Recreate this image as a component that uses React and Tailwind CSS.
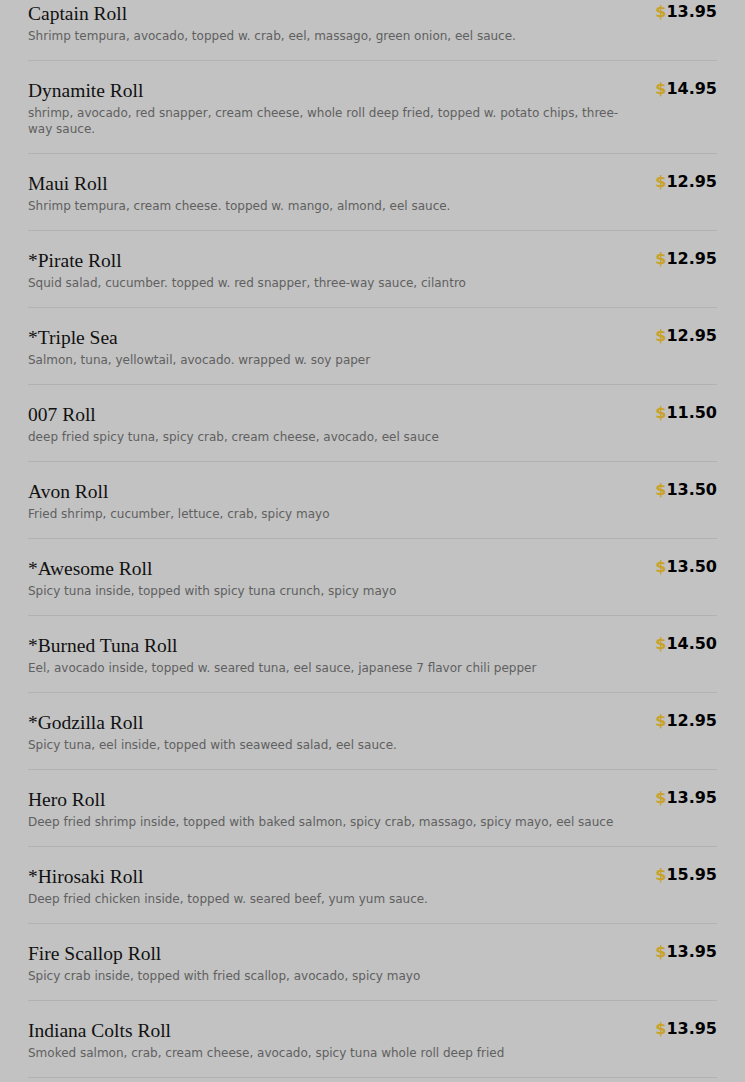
import React from "react";

const items = [
  ["Captain Roll", "Shrimp tempura, avocado, topped w. crab, eel, massago, green onion, eel sauce.", "13.95"],
  ["Dynamite Roll", "shrimp, avocado, red snapper, cream cheese, whole roll deep fried, topped w. potato chips, three-way sauce.", "14.95"],
  ["Maui Roll", "Shrimp tempura, cream cheese. topped w. mango, almond, eel sauce.", "12.95"],
  ["*Pirate Roll", "Squid salad, cucumber. topped w. red snapper, three-way sauce, cilantro", "12.95"],
  ["*Triple Sea", "Salmon, tuna, yellowtail, avocado. wrapped w. soy paper", "12.95"],
  ["007 Roll", "deep fried spicy tuna, spicy crab, cream cheese, avocado, eel sauce", "11.50"],
  ["Avon Roll", "Fried shrimp, cucumber, lettuce, crab, spicy mayo", "13.50"],
  ["*Awesome Roll", "Spicy tuna inside, topped with spicy tuna crunch, spicy mayo", "13.50"],
  ["*Burned Tuna Roll", "Eel, avocado inside, topped w. seared tuna, eel sauce, japanese 7 flavor chili pepper", "14.50"],
  ["*Godzilla Roll", "Spicy tuna, eel inside, topped with seaweed salad, eel sauce.", "12.95"],
  ["Hero Roll", "Deep fried shrimp inside, topped with baked salmon, spicy crab, massago, spicy mayo, eel sauce", "13.95"],
  ["*Hirosaki Roll", "Deep fried chicken inside, topped w. seared beef, yum yum sauce.", "15.95"],
  ["Fire Scallop Roll", "Spicy crab inside, topped with fried scallop, avocado, spicy mayo", "13.95"],
  ["Indiana Colts Roll", "Smoked salmon, crab, cream cheese, avocado, spicy tuna whole roll deep fried", "13.95"],
];

export default function App() {
  return (
    <div className="min-h-[1082px] h-[1082px] overflow-hidden bg-[#c2c2c2]">
      <div className="px-[28px] -mt-4">
        {items.map(([name, desc, price]) => (
          <div key={name} className="flex items-start pt-[17px] pb-[16px] border-b border-[#b2b2b2]">
            <div className="flex-1 min-w-0 pr-[30px]">
              <div
                className="text-[19.5px] leading-[26px] mb-[1px] text-[#111]"
                style={{ fontFamily: '"Liberation Serif", "DejaVu Serif", serif' }}
              >
                {name}
              </div>
              <div
                className="text-[12px] leading-[16px] text-[#606060]"
                style={{ fontFamily: '"DejaVu Sans", sans-serif' }}
              >
                {desc}
              </div>
            </div>
            <div
              className="text-[16px] leading-[21px] font-bold text-black whitespace-nowrap"
              style={{ fontFamily: '"DejaVu Sans", sans-serif' }}
            >
              <span className="text-[#c9a227]">$</span>
              {price}
            </div>
          </div>
        ))}
      </div>
    </div>
  );
}
